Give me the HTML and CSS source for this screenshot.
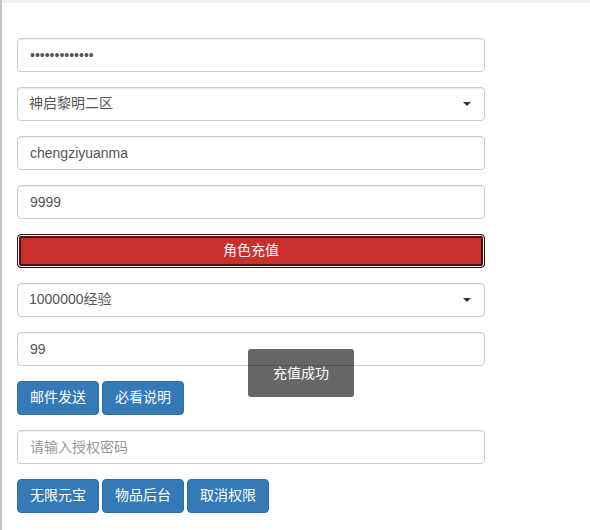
FILE: index.html
```html
<!DOCTYPE html>
<html lang="zh-CN">
<head>
<meta charset="utf-8">
<title>角色充值</title>
<link rel="stylesheet" href="styles.css">
</head>
<body>
<div class="page">
  <div class="topband"></div>
  <form class="panel">
    <div class="form-group">
      <input class="form-control" type="password" value="1234567890123">
    </div>
    <div class="form-group select-wrap">
      <select class="form-control"><option>神启黎明二区</option></select>
      <span class="caret"></span>
    </div>
    <div class="form-group">
      <input class="form-control" type="text" value="chengziyuanma">
    </div>
    <div class="form-group">
      <input class="form-control" type="text" value="9999">
    </div>
    <div class="form-group">
      <button type="button" class="btn btn-danger btn-block">角色充值</button>
    </div>
    <div class="form-group select-wrap">
      <select class="form-control"><option>1000000经验</option></select>
      <span class="caret"></span>
    </div>
    <div class="form-group">
      <input class="form-control" type="text" value="99">
    </div>
    <div class="form-group btn-row">
      <button type="button" class="btn btn-primary">邮件发送</button>
      <button type="button" class="btn btn-primary">必看说明</button>
    </div>
    <div class="form-group">
      <input class="form-control" type="text" placeholder="请输入授权密码">
    </div>
    <div class="form-group btn-row">
      <button type="button" class="btn btn-primary">无限元宝</button>
      <button type="button" class="btn btn-primary">物品后台</button>
      <button type="button" class="btn btn-primary">取消权限</button>
    </div>
    <div class="toast">充值成功</div>
  </form>
</div>
</body>
</html>
```

FILE: styles.css
```css
* { box-sizing: border-box; }
html, body { margin: 0; padding: 0; background: #fff; }
body {
  font-family: "Liberation Sans", "Noto Sans CJK SC", sans-serif;
  font-size: 14px;
  line-height: 1.42857;
  color: #333;
}
.page {
  width: 590px;
  height: 530px;
  border-left: 2px solid #c4c4c4;
  overflow: hidden;
}
.topband {
  height: 3px;
  background: #f1f1f1;
}
.panel {
  position: relative;
  width: 468px;
  margin: 35px 0 0 15px;
}
.form-group { margin-bottom: 15px; }
.form-group:last-of-type { margin-bottom: 0; }
.form-control {
  display: block;
  width: 100%;
  height: 34px;
  padding: 6px 12px;
  font-family: inherit;
  font-size: 14px;
  line-height: 1.42857;
  color: #555;
  background: #fff;
  border: 1px solid #ccc;
  border-radius: 4px;
  box-shadow: inset 0 1px 1px rgba(0,0,0,.075);
  outline: none;
}
.form-control::placeholder { color: #999; }
select.form-control {
  -webkit-appearance: none;
  appearance: none;
  padding-left: 11px;
}
.select-wrap { position: relative; }
.caret {
  position: absolute;
  right: 14px;
  top: 15px;
  width: 0;
  height: 0;
  border-left: 4px solid transparent;
  border-right: 4px solid transparent;
  border-top: 4px solid #333;
  pointer-events: none;
}
.btn {
  display: inline-block;
  height: 34px;
  padding: 6px 12px;
  font-family: inherit;
  font-size: 14px;
  line-height: 1.42857;
  text-align: center;
  border: 1px solid transparent;
  border-radius: 4px;
  cursor: pointer;
}
.btn-block { display: block; width: 100%; }
.btn-danger {
  color: #fff;
  background: #c9302c;
  border-color: #3a0e0d;
  box-shadow: inset 0 0 0 1px #fff, inset 0 0 0 3px #4a1311;
}
.btn-primary {
  color: #fff;
  background: #337ab7;
  border-color: #2e6da4;
}
.btn-row { display: flex; gap: 3px; }
.toast {
  position: absolute;
  left: 231px;
  top: 311px;
  width: 106px;
  height: 48px;
  padding: 15px 0;
  text-align: center;
  line-height: 18px;
  color: #fff;
  background: rgba(0,0,0,.6);
  border-radius: 3px;
}
```
